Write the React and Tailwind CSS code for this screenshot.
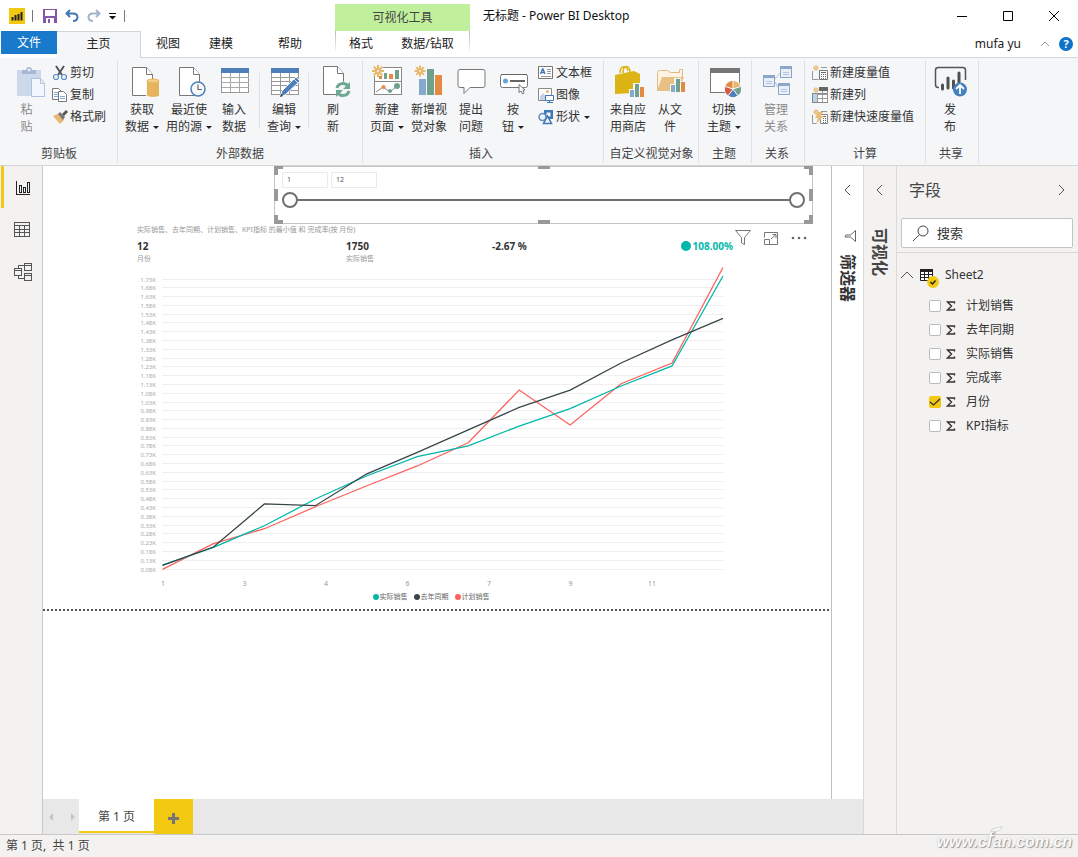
import { useState } from 'react';

const MONTH_SERIES = [
  { name: '计划销售', color: '#fd625e', values: [81, 227, 312, 437, 555, 669, 801, 1101, 902, 1137, 1255, 1798] },
  { name: '实际销售', color: '#01b8aa', values: [105, 206, 329, 481, 612, 722, 783, 896, 995, 1124, 1238, 1750] },
  { name: '去年同期', color: '#374649', values: [103, 208, 453, 443, 623, 746, 874, 1002, 1101, 1255, 1386, 1509] },
];

const LEGEND = [
  { name: '实际销售', dot: 'bg-[#01b8aa]' },
  { name: '去年同期', dot: 'bg-[#374649]' },
  { name: '计划销售', dot: 'bg-[#fd625e]' },
];

const FIELDS = ['计划销售', '去年同期', '实际销售', '完成率', '月份', 'KPI指标'];

/* ---------- icons ---------- */

function Big({ children }) {
  return (
    <svg viewBox="0 0 32 32" className="w-8 h-8 shrink-0 overflow-visible" fill="none" aria-hidden="true">{children}</svg>
  );
}

function Small({ children }) {
  return (
    <svg viewBox="0 0 16 16" className="w-4 h-4 shrink-0 overflow-visible" fill="none" aria-hidden="true">{children}</svg>
  );
}

function Doc({ y = 1 }) {
  return (
    <g stroke="#777" fill="#fff">
      <path d={`M6.500 ${y + 0.5}h14l6 7v21h-20z`} />
      <path d={`M20.500 ${y + 0.5}v7h6`} />
    </g>
  );
}

function Sun({ x, y, r = 6 }) {
  const k = r * 0.7;
  return (
    <g stroke="#e8b86c" strokeWidth={r > 5 ? 2 : 1}>
      <path d={`M${x - r} ${y}h${2 * r}M${x} ${y - r}v${2 * r}M${x - k} ${y - k}l${2 * k} ${2 * k}M${x - k} ${y + k}l${2 * k} ${-2 * k}`} />
      <circle cx={x} cy={y} r={r * 0.35} fill="#f5f6f8" />
    </g>
  );
}

function MiniBars({ x, y }) {
  return (
    <g shapeRendering="crispEdges">
      <path d={`M${x - 1} ${y + 5}h4v-6h7v3h5v11h-16z`} fill="#f5f6f8" />
      <rect x={x} y={y + 6} width="4" height="7" fill="#86a9d0" />
      <rect x={x + 5} y={y} width="4" height="13" fill="#6fa28e" />
      <rect x={x + 10} y={y + 3} width="4" height="10" fill="#e68a41" />
    </g>
  );
}

const icons = {
  paste: (
    <Big>
      <path d="M6 4h24v26H6z" fill="#cdd8ea" />
      <path d="M11 8V4h4c0-4 6-4 6 0h4v4z" fill="#a6b7d3" />
      <circle cx="18" cy="4" r="1.500" fill="#e9eef6" />
      <path d="M20.500 12.500h9l4 5v13h-13z" fill="#f3f7fd" stroke="#aec2e0" />
      <path d="M29.500 12.500v5h4" stroke="#aec2e0" />
    </Big>
  ),
  getData: (
    <Big>
      <Doc />
      <path d="M20 14h14v17H20z" fill="#f5f6f8" />
      <path d="M21 15v14c0 2.500 12 2.500 12 0V15z" fill="#e5b45c" />
      <ellipse cx="27" cy="15" rx="6" ry="2" fill="#f2cd87" stroke="#e5b45c" />
    </Big>
  ),
  recent: (
    <Big>
      <Doc />
      <circle cx="25" cy="23" r="7" fill="#f8fafc" stroke="#4d80bb" strokeWidth="1.500" />
      <path d="M25 18.500v5h4" stroke="#666" strokeWidth="1.200" />
    </Big>
  ),
  table: (
    <Big>
      <g shapeRendering="crispEdges">
        <path d="M3.500 2.500h27v24h-27z" fill="#fff" stroke="#999" />
        <path d="M3 2h28v5H3z" fill="#4d80bb" />
        <path d="M12.500 7v19M21.500 7v19M4 11.500h27M4 16.500h27M4 21.500h27" stroke="#aaa" />
      </g>
    </Big>
  ),
  editQuery: (
    <Big>
      <g shapeRendering="crispEdges">
        <path d="M3.500 2.500h27v26h-27z" fill="#fff" stroke="#999" />
        <path d="M3 2h28v5H3z" fill="#4d80bb" />
        <path d="M12.500 7v21M21.500 7v21M4 11.500h27M4 15.500h27M4 19.500h27M4 24.500h27" stroke="#999" />
      </g>
      <path d="M28 11l4 4-15 14-5 2 2-6z" fill="#4d80bb" stroke="#f5f6f8" />
      <path d="M26 13l4 4" stroke="#dce7f3" />
      <path d="M12 31l1-3 2 2z" fill="#333" />
    </Big>
  ),
  refresh: (
    <Big>
      <Doc y={0} />
      <circle cx="26" cy="23.500" r="8" fill="#f5f6f8" />
      <path d="M20 22c1-5 8-6 11-2M32 25c-1 5-8 6-11 2" stroke="#6fa892" strokeWidth="3" />
      <path d="M33 16v7h-7zM19 31v-7h7z" fill="#6fa892" />
    </Big>
  ),
  newPage: (
    <Big>
      <g shapeRendering="crispEdges">
        <path d="M3.500 1.500h27v27h-27z" fill="#fff" stroke="#888" />
        <path d="M4 15.500h27" stroke="#888" />
        <path d="M13 7h3v6h-3zM24 4h4v9h-4z" fill="#6fa28e" />
        <path d="M8 10h3v3H8zM18 8h4v5h-4z" fill="#e68a41" />
        <path d="M0 0h12v10H0z" fill="#f5f6f8" />
      </g>
      <path d="M5 26l7-5 7 5 7-6" stroke="#888" />
      <circle cx="12.500" cy="21" r="2" fill="#e68a41" />
      <circle cx="19" cy="25" r="2" fill="#6fa28e" />
      <circle cx="26" cy="20" r="3" fill="#6fa28e" />
      <Sun x={7} y={5} />
    </Big>
  ),
  newVisual: (
    <Big>
      <g shapeRendering="crispEdges">
        <path d="M6 13h7v16H6z" fill="#86a9d0" />
        <path d="M14 3h7v26h-7z" fill="#6fa28e" />
        <path d="M22 9h7v20h-7z" fill="#e68a41" />
      </g>
      <Sun x={7} y={5} r={5.5} />
    </Big>
  ),
  question: (
    <Big>
      <path d="M5 3.500h23q2 0 2 2v14q0 2-2 2H15l-6 6v-6H5q-2 0-2-2v-14q0-2 2-2z" fill="#fff" stroke="#777" />
    </Big>
  ),
  button: (
    <Big>
      <rect x="3.500" y="8.500" width="27" height="13" rx="2" fill="#fff" stroke="#777" />
      <path d="M4 8.500h26" stroke="#666" />
      <circle cx="8.500" cy="15" r="2.500" fill="#6ea3d6" />
      <path d="M13 15h15" stroke="#666" strokeWidth="2" />
      <path d="M22 18.500v8l2-1.500 1.500 3 1.500-1-1-3h2z" fill="#fff" stroke="#777" />
    </Big>
  ),
  store: (
    <Big>
      <path d="M8 7c0-8 7-8 8-2M11 7c0-9 7-8 7-1" stroke="#dcb415" strokeWidth="1.500" />
      <path d="M3 9l19-4 6 3v20l-6-1-19 1z" fill="#dcb415" />
      <MiniBars x={18} y={18} />
    </Big>
  ),
  folder: (
    <Big>
      <path d="M3.500 6.500q0-2 2-2h8l3 2h9V3.500h3v10l-5 11h-20z" fill="#fdf3e0" stroke="#dfbb86" />
      <path d="M8 11h22l-6 14H3z" fill="#e8c083" />
      <MiniBars x={17} y={13} />
    </Big>
  ),
  theme: (
    <Big>
      <path d="M2.500 3.500h29v23h-29z" fill="#fff" stroke="#777" shapeRendering="crispEdges" />
      <path d="M2 2h30v5H2z" fill="#757575" />
      <circle cx="25" cy="23" r="9" fill="#f5f6f8" />
      <path d="M25 23v-8a8 8 0 0 1 7.600 5.500z" fill="#e8b86c" />
      <path d="M25 23v-8a8 8 0 0 0-7.600 5.500z" fill="#e68a41" />
      <path d="M25 23l7.600-2.500a8 8 0 0 1-2.900 9z" fill="#6fa28e" />
      <path d="M25 23l4.700 6.500a8 8 0 0 1-9.400 0z" fill="#4d80bb" />
      <path d="M25 23l-4.700 6.500a8 8 0 0 1-2.900-9z" fill="#d55a3f" />
      <path d="M25 23v-8M25 23l7.600-2.500M25 23l4.700 6.500M25 23l-4.700 6.500M25 23l-7.600-2.500" stroke="#f5f6f8" />
    </Big>
  ),
  relation: (
    <Big>
      <path d="M15 13l5-6M15 16l4 7" stroke="#b3bfd4" />
      <g stroke="#8ea5cb" fill="#e9eff8" shapeRendering="crispEdges">
        <path d="M3.500 9.500h11v11h-11zM20.500.500h11v11h-11zM18.500 17.500h11v11h-11z" />
        <path d="M3 10h12M20 1.500h12M18 18.500h12" strokeWidth="3" />
        <path d="M6 15.500h6M6 17.500h6M23 6.500h6M23 8.500h6M21 23.500h6M21 25.500h6" stroke="#b7c6df" />
      </g>
    </Big>
  ),
  publish: (
    <Big>
      <path d="M5 21.500H4q-2.500 0-2.500-3V4q0-2.500 3-2.500h24q3 0 3 2.500v10" stroke="#555" strokeWidth="1.500" />
      <path d="M8.500 19v4M14 12v10M19.500 15v7M25 7v14" stroke="#505050" strokeWidth="3" strokeLinecap="round" />
      <circle cx="26" cy="23.500" r="7" fill="#4581bd" />
      <path d="M26 28v-9M22 23l4-4 4 4" stroke="#fff" strokeWidth="1.800" />
    </Big>
  ),
  cut: (
    <Small>
      <path d="M4 1l6 9M12 1l-6 9" stroke="#555" strokeWidth="2" />
      <circle cx="4" cy="12" r="2.500" stroke="#5b8cc5" strokeWidth="1.200" />
      <circle cx="12" cy="12" r="2.500" stroke="#5b8cc5" strokeWidth="1.200" />
    </Small>
  ),
  copy: (
    <Small>
      <path d="M.5 1.500h6l3 3v8h-9z" fill="#fff" stroke="#777" />
      <path d="M6.500 4.500h5l3 3v7h-8z" fill="#fff" stroke="#777" />
      <path d="M2 5.500h4M2 7.500h4M2 9.500h4M8 9.500h5M8 11.500h5" stroke="#8aa9cf" />
    </Small>
  ),
  brush: (
    <Small>
      <path d="M1 7l5-2 6 6-4 4z" fill="#e8b872" />
      <path d="M6 5l2-2 5 5-2 3z" fill="#777" />
      <path d="M10 5l4-4 2 2-4 4z" fill="#555" />
    </Small>
  ),
  textBox: (
    <Small>
      <path d="M.5 1.500h14v12H.5z" fill="#fff" stroke="#777" />
      <path d="M2.500 9L4.500 4h.5l2 5M3 7.500h3.500" stroke="#3f76b5" strokeWidth="1.300" />
      <path d="M9 4.500h4M9 6.500h4M9 8.500h4M3 11.500h10" stroke="#999" />
    </Small>
  ),
  image: (
    <Small>
      <path d="M.5 1.500h13v12H.5z" fill="#fff" stroke="#888" />
      <path d="M2 13V9l3-3 3 3v4z" fill="#c3d2e6" />
      <circle cx="9.500" cy="4.500" r="1.500" fill="#e8b86c" />
      <path d="M7.500 8.500h8v5h-8z" fill="#fff" stroke="#3f76b5" />
      <path d="M11.500 14v2M9 15.500h6" stroke="#3f76b5" />
    </Small>
  ),
  shapes: (
    <Small>
      <path d="M6 1h9v9H6z" fill="#3f76b5" />
      <path d="M8.500 3.500h4v4h-4z" fill="#f5f6f8" />
      <circle cx="4.500" cy="8" r="3.500" fill="#eef3f9" stroke="#5b8cc5" strokeWidth="1.500" />
      <path d="M9.500 7l4 7.500h-8z" fill="#eef3f9" stroke="#3f76b5" strokeWidth="1.500" />
    </Small>
  ),
  measure: (
    <Small>
      <path d="M.5 6v8.500h6M9 2.500h6" stroke="#999" />
      <path d="M7.500 5.500h8v9h-8z" fill="#fff" stroke="#777" />
      <path d="M9 7h5v1H9zM9 9h1v1H9zM11 9h1v1h-1zM13 9h1v1h-1zM9 11h1v1H9zM11 11h1v1h-1zM13 11h1v1h-1zM9 13h1v1H9zM11 13h1v1h-1zM13 13h1v1h-1z" fill="#666" />
      <Sun x={4} y={3} r={3} />
    </Small>
  ),
  column: (
    <Small>
      <g shapeRendering="crispEdges">
        <path d="M.5 6.500h15v9H.5z" fill="#fff" stroke="#888" />
        <path d="M1 7h4v8H1z" fill="#b9d3ea" />
        <path d="M7 0h9v4H7z" fill="#666" />
        <path d="M5.500 6v9M10.500 4v11M15.500 4v11M6 7.500h9M6 11.500h9" stroke="#999" />
      </g>
      <Sun x={4} y={3} r={3} />
    </Small>
  ),
  quick: (
    <Small>
      <path d="M.5 6v8.500h4M9 2.500h6" stroke="#999" />
      <path d="M8.500 5.500h7v9h-7z" fill="#fff" stroke="#888" />
      <path d="M10 7h4v1h-4zM11 9h1v1h-1zM13 9h1v1h-1zM11 11h1v1h-1zM13 11h1v1h-1zM11 13h1v1h-1zM13 13h1v1h-1z" fill="#666" />
      <path d="M6 3h5L9 7h3l-8 8 2-6H3z" fill="#e8bd7c" />
      <Sun x={4} y={3} r={3} />
    </Small>
  ),
};

function Caret() {
  return <span className="inline-block border-x-3 border-t-3 border-x-transparent border-t-[#222] ml-1 align-middle" />;
}

function Chevron({ d, className = 'text-[#555]' }) {
  return (
    <svg viewBox="0 0 12 12" className={`w-3 h-3 ${className}`} fill="none" stroke="currentColor" aria-hidden="true"><path d={d} /></svg>
  );
}

/* ---------- ribbon ---------- */

function BigButton({ icon, lines, caret, disabled, className = 'w-[42px]' }) {
  return (
    <button type="button" disabled={disabled} className={`flex flex-col items-center shrink-0 ${disabled ? 'text-[#8a8a8a]' : 'text-[#333]'} ${className}`}>
      {icons[icon]}
      <span className="mt-[3px] leading-[17px] whitespace-nowrap">
        {lines[0]}<br />{lines[1]}{caret && <Caret />}
      </span>
    </button>
  );
}

function SmallButton({ icon, label, caret }) {
  return (
    <button type="button" className="flex items-center gap-0.5 h-[22px] whitespace-nowrap text-[#333]">
      {icons[icon]}
      <span>{label}{caret && <Caret />}</span>
    </button>
  );
}

function Group({ label, className, children }) {
  return (
    <section aria-label={label} className={`flex flex-col shrink-0 my-0.5 border-r border-[#dfe1e4] ${className}`}>
      <div className="flex flex-1 pt-1.5">{children}</div>
      <div className="text-center leading-4 h-[17px] text-[#444] whitespace-nowrap">{label}</div>
    </section>
  );
}

function Divider() {
  return <span className="w-px h-[55px] mt-[7px] bg-[#dfe1e4] shrink-0" />;
}

function Ribbon() {
  return (
    <div className="flex h-[108px] bg-[#f5f6f8] border-b border-[#d5d5d5] pl-px shrink-0 overflow-hidden">
      <Group label="剪贴板" className="w-[117px]">
        <BigButton icon="paste" lines={['粘', '贴']} disabled className="w-[51px]" />
        <div className="flex flex-col -mt-1 items-start">
          <SmallButton icon="cut" label="剪切" />
          <SmallButton icon="copy" label="复制" />
          <SmallButton icon="brush" label="格式刷" />
        </div>
      </Group>
      <Group label="外部数据" className="w-[245px]">
        <BigButton icon="getData" lines={['获取', '数据']} caret className="w-[48px]" />
        <BigButton icon="recent" lines={['最近使', '用的源']} caret className="w-[46px]" />
        <BigButton icon="table" lines={['输入', '数据']} className="w-[44px]" />
        <span className="w-[3px]" />
        <Divider />
        <BigButton icon="editQuery" lines={['编辑', '查询']} caret className="w-[48px]" />
        <Divider />
        <BigButton icon="refresh" lines={['刷', '新']} className="w-[48px]" />
      </Group>
      <Group label="插入" className="w-[241px] pr-1">
        <BigButton icon="newPage" lines={['新建', '页面']} caret className="w-[48px]" />
        <BigButton icon="newVisual" lines={['新增视', '觉对象']} className="w-[36px]" />
        <BigButton icon="question" lines={['提出', '问题']} className="w-[48px]" />
        <BigButton icon="button" lines={['按', '钮']} caret className="w-[36px]" />
        <div className="flex flex-col -mt-1 pl-[7px] items-start">
          <SmallButton icon="textBox" label="文本框" />
          <SmallButton icon="image" label="图像" />
          <SmallButton icon="shapes" label="形状" caret />
        </div>
      </Group>
      <Group label="自定义视觉对象" className="w-[95px] pl-px">
        <BigButton icon="store" lines={['来自应', '用商店']} className="w-[46px]" />
        <BigButton icon="folder" lines={['从文', '件']} className="w-[38px]" />
      </Group>
      <Group label="主题" className="w-[53px] pr-0.5">
        <BigButton icon="theme" lines={['切换', '主题']} caret className="w-full" />
      </Group>
      <Group label="关系" className="w-[53px] pr-0.5">
        <BigButton icon="relation" lines={['管理', '关系']} disabled className="w-[48px]" />
      </Group>
      <Group label="计算" className="w-[121px]">
        <div className="flex flex-col -mt-1 pl-[7px] items-start">
          <SmallButton icon="measure" label="新建度量值" />
          <SmallButton icon="column" label="新建列" />
          <SmallButton icon="quick" label="新建快速度量值" />
        </div>
      </Group>
      <Group label="共享" className="w-[53px] pr-0.5">
        <BigButton icon="publish" lines={['发', '布']} className="w-[48px]" />
      </Group>
    </div>
  );
}

function TitleBar() {
  return (
    <div className="flex h-[31px] shrink-0">
      <div className="flex items-center w-[335px] pl-[9px] shrink-0">
        <svg viewBox="0 0 16 16" className="w-4 h-4" aria-hidden="true">
          <path d="M0 0h16v16H0z" fill="#f2c811" />
          <path d="M3.500 9v3.500M6.500 7v5.500M9.500 6v6.500M12.500 4v8.500" stroke="#222" strokeWidth="2" />
        </svg>
        <span className="w-px h-3 bg-[#777] ml-[7px] mr-2.5" />
        <button type="button" aria-label="保存">
          <svg viewBox="0 0 14 14" className="w-3.5 h-3.5">
            <path d="M0 0h14v14H0z" fill="#8656ad" />
            <path d="M2 1h10v6H2zM3 9h8v5H3z" fill="#fff" />
            <path d="M5 10h2v4H5z" fill="#8656ad" />
          </svg>
        </button>
        <button type="button" aria-label="撤消" className="ml-2">
          <svg viewBox="0 0 14 14" className="w-3.5 h-3.5" fill="none" stroke="#3f76b5" strokeWidth="2">
            <path d="M5 1L1.500 4.500 5 8M2 4.500h6c6 0 6 7.500 0 7.500" />
          </svg>
        </button>
        <button type="button" aria-label="恢复" className="ml-2">
          <svg viewBox="0 0 14 14" className="w-3.5 h-3.5" fill="none" stroke="#a3b2cc" strokeWidth="2">
            <path d="M9 1l3.500 3.500L9 8M12 4.500H6c-6 0-6 7.500 0 7.500" />
          </svg>
        </button>
        <button type="button" aria-label="自定义" className="ml-2">
          <svg viewBox="0 0 8 8" className="w-2 h-2"><path d="M0 1h7v1H0zM0 4h7L3.500 7.500z" fill="#111" /></svg>
        </button>
        <span className="w-px h-3 bg-[#777] ml-[7px]" />
      </div>
      <div className="w-[135px] mt-1 bg-[#c1f09d] text-[#444] flex items-center justify-center shrink-0">可视化工具</div>
      <h1 className="pl-[13px] flex items-center text-[#111]">无标题 - Power BI Desktop</h1>
      <div className="flex ml-auto pr-px">
        <button type="button" aria-label="最小化" className="w-[46px] flex items-center justify-center">
          <svg viewBox="0 0 10 10" className="w-2.5 h-2.5" stroke="#000"><path d="M0 5.500h10" /></svg>
        </button>
        <button type="button" aria-label="最大化" className="w-[46px] flex items-center justify-center">
          <svg viewBox="0 0 10 10" className="w-2.5 h-2.5" fill="none" stroke="#000"><path d="M.5.500h9v9h-9z" /></svg>
        </button>
        <button type="button" aria-label="关闭" className="w-[46px] flex items-center justify-center">
          <svg viewBox="0 0 10 10" className="w-2.5 h-2.5" stroke="#000"><path d="M0 0l10 10M10 0L0 10" /></svg>
        </button>
      </div>
    </div>
  );
}

function TabRow() {
  return (
    <div className="flex h-[27px] shrink-0 pl-px text-[#222]">
      <button type="button" className="w-14 h-[23px] bg-[#1979ca] text-white shrink-0">文件</button>
      <button type="button" className="w-[84px] bg-[#f5f6f8] border-t border-r border-[#d5d5d5] shrink-0 -mb-px pb-1">主页</button>
      <div className="flex flex-1 border-b border-[#d5d5d5]">
        <button type="button" className="w-[54px]">视图</button>
        <button type="button" className="w-[52px]">建模</button>
        <button type="button" className="w-[88px] pr-0.5">帮助</button>
        <span className="w-px h-5 bg-linear-to-b from-[#bbb] to-[#f2f2f2]" />
        <button type="button" className="w-[50px]">格式</button>
        <button type="button" className="w-[83px]">数据/钻取</button>
        <span className="w-px h-5 bg-linear-to-b from-[#bbb] to-[#f2f2f2]" />
        <div className="flex items-center ml-auto pr-[5px]">
          <span>mufa yu</span>
          <button type="button" aria-label="折叠功能区" className="ml-[18px]">
            <Chevron d="M2 8l4-4 4 4" className="text-[#999]" />
          </button>
          <button type="button" aria-label="帮助" className="ml-2 w-3.5 h-3.5 rounded-full bg-[#0e72c9] text-white text-[11px] leading-[14px] font-bold">?</button>
        </div>
      </div>
    </div>
  );
}

/* ---------- canvas ---------- */

const HANDLES = [
  '-top-px -left-px w-[9px] h-[9px] border-t-3 border-l-4',
  '-top-px -right-px w-[9px] h-[9px] border-t-3 border-r-4',
  '-bottom-px -left-px w-[9px] h-[9px] border-b-4 border-l-4',
  '-bottom-px -right-px w-[9px] h-[9px] border-b-4 border-r-4',
  '-top-px left-1/2 -ml-1.5 w-3 border-t-3',
  '-bottom-px left-1/2 -ml-1.5 w-3 border-b-4',
  'top-1/2 -mt-1.5 -left-px h-3 border-l-4',
  'top-1/2 -mt-1.5 -right-px h-3 border-r-4',
];

function Slicer() {
  const [range, setRange] = useState([1, 12]);
  const thumb =
    'absolute inset-0 w-full h-4 m-0 appearance-none bg-transparent pointer-events-none [&::-webkit-slider-thumb]:pointer-events-auto [&::-webkit-slider-thumb]:appearance-none [&::-webkit-slider-thumb]:w-4 [&::-webkit-slider-thumb]:h-4 [&::-webkit-slider-thumb]:rounded-full [&::-webkit-slider-thumb]:bg-white [&::-webkit-slider-thumb]:border-2 [&::-webkit-slider-thumb]:border-[#707070]';
  return (
    <div className="relative w-[539px] h-[58px] ml-[231px] border border-[#c4c4c4] px-[7px] pt-[5px]">
      {HANDLES.map((h) => <span key={h} className={`absolute border-[#999] ${h}`} />)}
      <div className="flex gap-[3px]">
        {range.map((v, i) => (
          <input key={i} type="text" aria-label={i ? '最大值' : '最小值'} value={v} size="4"
            onChange={(e) => setRange(range.map((r, j) => (j === i ? Number(e.target.value) || 0 : r)))}
            className="w-[46px] h-4 border border-[#ebebeb] px-1 text-[7px] text-[#555] outline-none" />
        ))}
      </div>
      <div className="relative h-4 mt-1">
        <span className="absolute inset-x-2 top-[7px] h-0.5 bg-[#707070]" />
        {range.map((v, i) => (
          <input key={i} type="range" aria-label={i ? '结束' : '开始'} min="1" max="12" value={v} className={thumb}
            onChange={(e) => setRange(range.map((r, j) => (j === i ? Number(e.target.value) : r)))} />
        ))}
      </div>
    </div>
  );
}

function LineChart() {
  const px = (i) => 25.5 + (i * 560.5) / 11;
  const py = (v) => 305.5 - ((v - 80) * 290) / 1650;
  const ticks = Array.from({ length: 34 }, (_, i) => 1730 - i * 50);
  const months = ['1', '3', '4', '6', '7', '9', '11'];
  return (
    <svg viewBox="0 0 596 324" className="w-full block" role="img" aria-label="按月份的销售折线图">
      {ticks.map((t) => (
        <g key={t}>
          <path d={`M25 ${Math.round(py(t)) - 0.5}H586`} stroke="#efefef" />
          <text x="19" y={py(t) + 2} textAnchor="end" className="text-[6px] fill-[#aaa]">{(t / 1000).toFixed(2)}K</text>
        </g>
      ))}
      {months.map((m, i) => (
        <text key={m} x={26 + (i * 489) / 6} y="322" textAnchor="middle" className="text-[7px] fill-[#999]">{m}</text>
      ))}
      {MONTH_SERIES.map((s) => (
        <polyline key={s.name} fill="none" stroke={s.color} strokeWidth="1.3"
          points={s.values.map((v, i) => `${px(i)},${py(v)}`).join(' ')} />
      ))}
    </svg>
  );
}

function KpiVisual() {
  return (
    <div className="flex ml-[94px]">
      <div className="w-[596px] shrink-0">
        <div className="text-[7px] leading-[11px] text-[#999]">实际销售、去年同期、计划销售、KPI指标 的最小值 和 完成率(按 月份)</div>
        <div className="grid grid-cols-[209px_146px_1fr_auto] mt-1 text-[10px] leading-[14px] font-bold text-[#333]">
          <div>12<div className="text-[7px] leading-[11px] font-normal text-[#999]">月份</div></div>
          <div>1750<div className="text-[7px] leading-[11px] font-normal text-[#999]">实际销售</div></div>
          <div>-2.67 %</div>
          <div className="flex gap-0.5 h-3.5 items-center text-[#01b8aa]">
            <span className="w-2.5 h-2.5 rounded-full bg-[#01b8aa]" />108.00%
          </div>
        </div>
        <LineChart />
        <div className="flex justify-center gap-1.5 mt-[3px] pr-2 text-[7px] leading-3 text-[#666]">
          {LEGEND.map((l) => (
            <span key={l.name} className="flex items-center gap-px"><span className={`w-1.5 h-1.5 rounded-full ${l.dot}`} />{l.name}</span>
          ))}
        </div>
      </div>
      <div className="flex gap-3 pt-1.5 pl-0.5 items-start">
        <button type="button" aria-label="筛选器">
          <svg viewBox="0 0 16 16" className="w-4 h-4" fill="none" stroke="#777"><path d="M.5.500h15l-6 7v7l-3-1.500V7.500z" /></svg>
        </button>
        <button type="button" aria-label="焦点模式">
          <svg viewBox="0 0 16 16" className="w-4 h-4" fill="none" stroke="#777">
            <path d="M1.500 7.500v-5h13v12h-13v-5h5v5M8 9l5-4.500M9.500 4.500h3.500V8" />
          </svg>
        </button>
        <button type="button" aria-label="更多选项">
          <svg viewBox="0 0 16 16" className="w-4 h-4" fill="#666"><circle cx="2" cy="8" r="1.300" /><circle cx="8" cy="8" r="1.300" /><circle cx="14" cy="8" r="1.300" /></svg>
        </button>
      </div>
    </div>
  );
}

function PageTabs() {
  return (
    <div className="flex h-[35px] bg-[#e8e8e8] shrink-0">
      <div className="flex items-center justify-between w-9 px-1.5">
        <button type="button" aria-label="上一页" className="border-y-4 border-r-4 border-y-transparent border-r-[#c4c4c4]" />
        <button type="button" aria-label="下一页" className="border-y-4 border-l-4 border-y-transparent border-l-[#c4c4c4] -mr-0.5" />
      </div>
      <button type="button" className="w-[75px] mb-px pt-1 bg-white border-b-2 border-[#f2c811] text-[#444]">第 1 页</button>
      <button type="button" aria-label="新建页" className="w-[39px] bg-[#f2c811] flex items-center justify-center pt-1">
        <svg viewBox="0 0 11 11" className="w-[11px] h-[11px]" stroke="#757575" strokeWidth="3"><path d="M0 5.500h11M5.500 0v11" /></svg>
      </button>
    </div>
  );
}

/* ---------- side panes ---------- */

function ViewRail() {
  return (
    <nav className="w-[43px] pl-px bg-[#f3f2f1] border-r border-[#c8c8c8] shrink-0 flex flex-col">
      <button type="button" aria-label="报表" className="h-[42px] border-l-3 border-[#f2c811] flex items-center justify-center pt-0.5">
        <svg viewBox="0 0 16 16" className="w-4 h-4" fill="none" stroke="#222" shapeRendering="crispEdges">
          <path d="M1.500 1v13.500H15M4.500 5.500h2v7h-2zM8.500 7.500h2v5h-2zM12.500 2.500h2v10h-2z" />
        </svg>
      </button>
      <button type="button" aria-label="数据" className="h-[42px] flex items-center justify-center pt-0.5">
        <svg viewBox="0 0 16 16" className="w-4 h-4" fill="none" stroke="#555" shapeRendering="crispEdges">
          <path d="M.5.500h15v14H.5zM0 3.500h16M0 7.500h16M0 10.500h16M5.500 4v11M10.500 4v11" />
        </svg>
      </button>
      <button type="button" aria-label="模型" className="h-[42px] flex items-center justify-center pt-0.5 pl-0.5">
        <svg viewBox="0 0 18 18" className="w-[18px] h-[18px]" fill="none" stroke="#555" shapeRendering="crispEdges">
          <path d="M.5 5.500h7v7h-7zM10.500.500h7v7h-7zM10.500 10.500h7v7h-7zM0 7.500h8M10 2.500h8M10 12.500h8M4.500 5V2.500H10M4.500 13v2.500H10" />
        </svg>
      </button>
    </nav>
  );
}

function FieldsPane() {
  const [checked, setChecked] = useState({ 月份: true });
  return (
    <aside className="w-[182px] border-l border-[#dadada] bg-[#f3f2f1] shrink-0 text-[#333]">
      <div className="flex items-center justify-between pl-3 pr-[11px] h-12">
        <h2 className="text-base text-[#444]">字段</h2>
        <button type="button" aria-label="折叠"><Chevron d="M4 1l5 5-5 5" /></button>
      </div>
      <div className="pl-1 pr-[5px] pt-1 pb-1 border-b border-[#d8d8d8]">
        <label className="flex items-center gap-2 h-[30px] bg-white border border-[#c4c4c4] rounded-xs pl-[11px]">
          <svg viewBox="0 0 16 16" className="w-4 h-4 shrink-0" fill="none" stroke="#444"><circle cx="10" cy="6" r="5" /><path d="M6.500 9.500L0 16" /></svg>
          <input type="text" aria-label="搜索" placeholder="搜索" className="w-full text-[13px] outline-none placeholder:text-[#333]" />
        </label>
      </div>
      <div className="flex items-center h-6 mt-2.5 pl-1">
        <button type="button" aria-label="收起 Sheet2"><Chevron d="M0 9l6-6 6 6" /></button>
        <svg viewBox="0 0 20 20" className="w-5 h-5 ml-[7px] mt-1.5 shrink-0" fill="none" aria-hidden="true">
          <path d="M.5 1.500h12v11H.5z" fill="#fff" stroke="#222" />
          <path d="M0 1h13v3H0z" fill="#222" />
          <path d="M4.500 4v9M8.500 4v9M0 6.500h13M0 9.500h13" stroke="#222" />
          <circle cx="13" cy="14" r="6" fill="#f2c811" />
          <path d="M10.500 14l2 2 3-3.500" stroke="#222" strokeWidth="1.500" />
        </svg>
        <span className="ml-[5px]">Sheet2</span>
      </div>
      <ul className="pt-[7px]">
        {FIELDS.map((f) => (
          <li key={f}>
            <label className="flex items-center h-6 pl-8">
              <span className="relative w-3 h-3 shrink-0">
                <input type="checkbox" checked={!!checked[f]} onChange={() => setChecked({ ...checked, [f]: !checked[f] })}
                  className="block w-3 h-3 appearance-none rounded-xs border border-[#bbb] bg-white checked:bg-[#f2c811] checked:border-[#f2c811]" />
                {checked[f] && (
                  <svg viewBox="0 0 12 12" className="absolute inset-0 pointer-events-none" fill="none" stroke="#333" strokeWidth="1.300"><path d="M1 6l3.500 3L11 3" /></svg>
                )}
              </span>
              <svg viewBox="0 0 10 10" className="w-2.5 h-2.5 ml-[5px] mr-2.5 shrink-0" fill="none" stroke="#333" strokeWidth="1.400" aria-hidden="true">
                <path d="M8.500 2.500V1H1.500l4 4-4 4h7V7.500" />
              </svg>
              {f}
            </label>
          </li>
        ))}
      </ul>
    </aside>
  );
}

function StatusBar() {
  return (
    <footer className="flex items-center justify-between h-[23px] pl-1.5 pr-1.5 bg-[#f3f2f1] border-t border-[#c8c8c8] shrink-0 text-[#444]">
      <span>第 1 页,&nbsp; 共 1 页</span>
      <span className="relative flex items-baseline font-['Liberation_Sans',sans-serif] italic font-bold text-[16px] leading-4 text-[#fafafa] [text-shadow:1px_1px_1px_#999,0_0_1px_#aaa] -mt-2.5">
        www.c<span className="text-[22px] font-normal">f</span>an.com.cn
        <svg viewBox="0 0 12 6" className="absolute -top-1.5 left-[54px] w-3 h-1.5" aria-hidden="true">
          <path d="M0 5C2 1 7 3 11 0c0 5-6 6-11 5z" fill="#fafafa" stroke="#bbb" strokeWidth=".6" />
        </svg>
      </span>
    </footer>
  );
}

export default function App() {
  return (
    <div className="flex flex-col h-screen bg-white overflow-hidden text-[12px] leading-4 font-['Noto_Sans','Noto_Sans_CJK_SC',sans-serif]">
      <TitleBar />
      <TabRow />
      <Ribbon />
      <div className="flex flex-1 min-h-0">
        <ViewRail />
        <div className="flex flex-col flex-1 min-w-0">
          <div className="flex flex-1 min-h-0">
            <main className="flex-1 min-w-0 overflow-hidden">
              <Slicer />
              <KpiVisual />
              <div className="h-0.5 mt-1.5 bg-[repeating-linear-gradient(90deg,#555_0_2px,transparent_2px_4px)]" />
            </main>
            <aside className="w-8 border-l border-[#c0c0c0] flex flex-col items-center shrink-0">
              <button type="button" aria-label="展开筛选器" className="h-12 flex items-center"><Chevron d="M8 1L3 6l5 5" /></button>
              <svg viewBox="0 0 12 12" className="w-3 h-3 mt-4 ml-1 shrink-0" fill="none" stroke="#666"><path d="M11.500.500v11l-5-4.500H1l1-2h4.500z" /></svg>
              <h2 className="mt-3 text-base leading-5 font-bold text-[#333] [writing-mode:vertical-rl] [text-orientation:sideways]">筛选器</h2>
            </aside>
          </div>
          <PageTabs />
        </div>
        <aside className="w-[33px] border-l border-[#dadada] bg-[#f3f2f1] flex flex-col items-center shrink-0">
          <button type="button" aria-label="展开可视化" className="h-12 flex items-center"><Chevron d="M8 1L3 6l5 5" /></button>
          <h2 className="mt-3.5 text-base leading-5 font-bold text-[#444] [writing-mode:vertical-rl] [text-orientation:sideways]">可视化</h2>
        </aside>
        <FieldsPane />
      </div>
      <StatusBar />
    </div>
  );
}
